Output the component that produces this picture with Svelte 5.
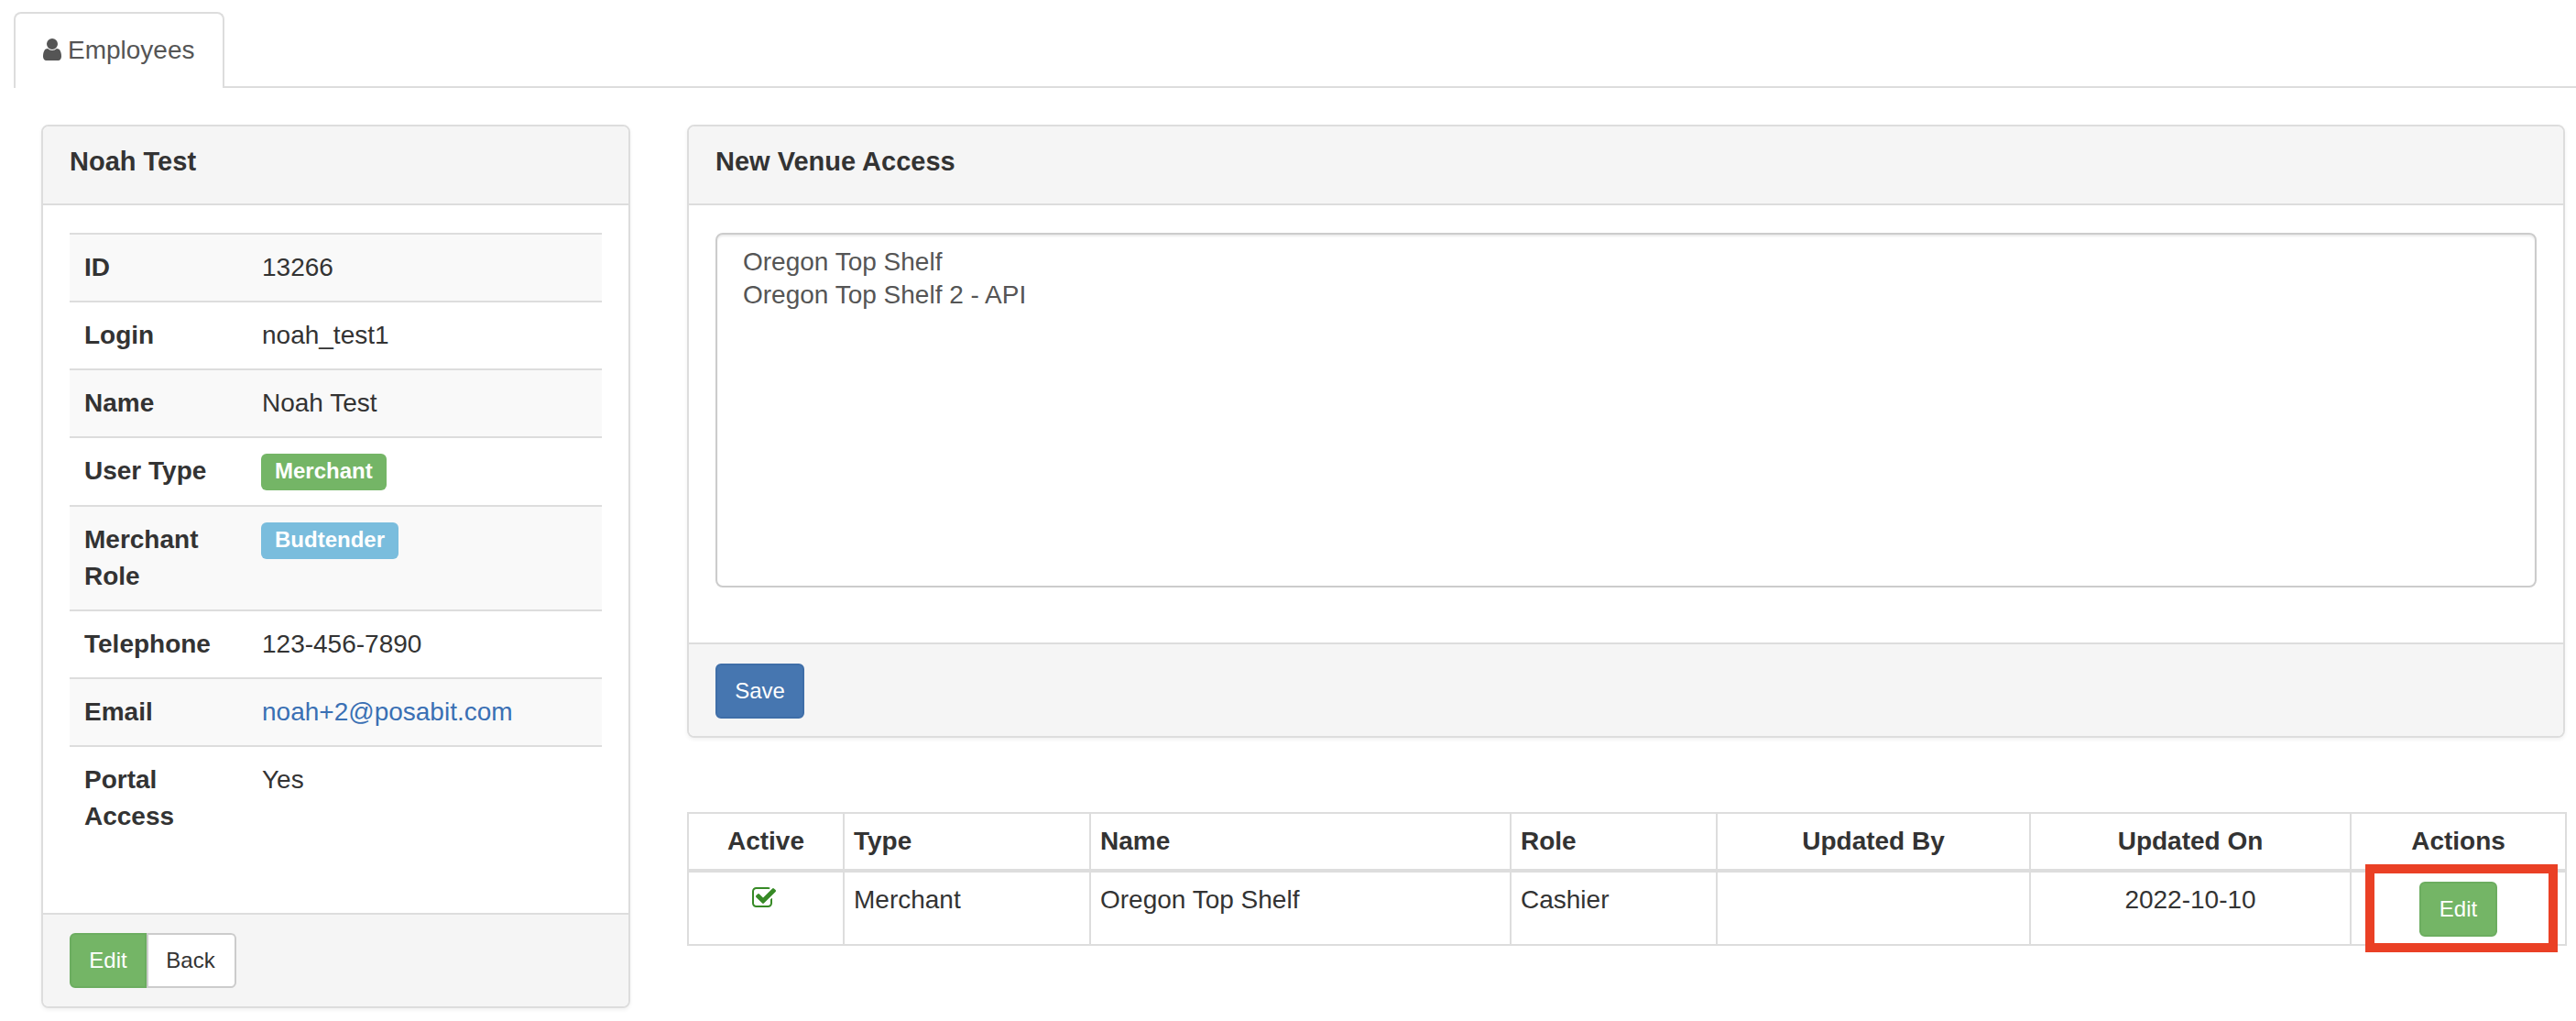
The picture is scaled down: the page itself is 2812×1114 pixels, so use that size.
<script>
  const details = [
    { k: 'ID', v: '13266' },
    { k: 'Login', v: 'noah_test1' },
    { k: 'Name', v: 'Noah Test' },
    { k: 'User Type', label: 'Merchant', tone: 'green' },
    { k: 'Merchant Role', label: 'Budtender', tone: 'blue' },
    { k: 'Telephone', v: '123-456-7890' },
    { k: 'Email', link: 'noah+2@posabit.com' },
    { k: 'Portal Access', v: 'Yes' }
  ];
  const widths = [170, 269, 459, 225, 342, 350, 235];
</script>

<div class="page">
  <nav class="tabs">
    <div class="tab">
      <svg class="user" viewBox="0 0 1792 1792" aria-hidden="true"><path d="M1536 1399q0 109-62.5 187t-150.5 78h-854q-88 0-150.5-78t-62.5-187q0-85 8.5-160.5t31.5-152 58.5-131 94-89 134.5-34.5q131 128 313 128t313-128q76 0 134.5 34.5t94 89 58.5 131 31.5 152 8.5 160.5zm-256-887q0 159-112.5 271.5t-271.5 112.5-271.5-112.5-112.5-271.5 112.5-271.5 271.5-112.5 271.5 112.5 112.5 271.5z"/></svg>
      Employees
    </div>
    <div class="tab-rest"></div>
  </nav>

  <div class="content">
    <section class="panel left">
      <header class="panel-head">Noah Test</header>
      <div class="panel-body">
        <table class="info">
          <tbody>
            {#each details as d}
              <tr>
                <th>{d.k}</th>
                <td>
                  {#if d.label}
                    <span class="label {d.tone}">{d.label}</span>
                  {:else if d.link}
                    <a href="#top">{d.link}</a>
                  {:else}
                    {d.v}
                  {/if}
                </td>
              </tr>
            {/each}
          </tbody>
        </table>
      </div>
      <footer class="panel-foot">
        <div class="btn-group">
          <button class="btn success">Edit</button>
          <button class="btn plain">Back</button>
        </div>
      </footer>
    </section>

    <div class="right">
      <section class="panel">
        <header class="panel-head">New Venue Access</header>
        <div class="panel-body">
          <div class="listbox" role="listbox" aria-multiselectable="true">
            <div role="option" aria-selected="false">Oregon Top Shelf</div>
            <div role="option" aria-selected="false">Oregon Top Shelf 2 - API</div>
          </div>
        </div>
        <footer class="panel-foot save-foot">
          <button class="btn primary">Save</button>
        </footer>
      </section>

      <table class="venues">
        <colgroup>
          {#each widths as w}<col style="width:{w}px" />{/each}
        </colgroup>
        <thead>
          <tr>
            <th class="c">Active</th>
            <th>Type</th>
            <th>Name</th>
            <th>Role</th>
            <th class="c">Updated By</th>
            <th class="c">Updated On</th>
            <th class="c">Actions</th>
          </tr>
        </thead>
        <tbody>
          <tr>
            <td class="c">
              <svg class="check" viewBox="0 0 1792 1792" aria-hidden="true"><path d="M1472 930v318q0 119-84.5 203.5t-203.5 84.5h-832q-119 0-203.5-84.5t-84.5-203.5v-832q0-119 84.5-203.5t203.5-84.5h832q63 0 117 25 15 7 18 23 3 17-9 29l-49 49q-10 10-23 10-3 0-9-2-23-6-45-6h-832q-66 0-113 47t-47 113v832q0 66 47 113t113 47h832q66 0 113-47t47-113v-254q0-13 9-22l64-64q10-10 23-10 6 0 12 3 20 8 20 29zm231-489l-814 814q-24 24-57 24t-57-24l-430-430q-24-24-24-57t24-57l110-110q24-24 57-24t57 24l263 263 647-647q24-24 57-24t57 24l110 110q24 24 24 57t-24 57z"/></svg>
            </td>
            <td>Merchant</td>
            <td>Oregon Top Shelf</td>
            <td>Cashier</td>
            <td></td>
            <td class="c">2022-10-10</td>
            <td class="c action">
              <button class="btn success">Edit</button>
              <span class="callout"></span>
            </td>
          </tr>
        </tbody>
      </table>
    </div>
  </div>
</div>

<style>
  :global(body) {
    margin: 0;
    background: #fff;
  }
  .page {
    font-family: "Liberation Sans", Arial, sans-serif;
    font-size: 28px;
    line-height: 40px;
    color: #333;
    padding-top: 13px;
    box-sizing: border-box;
    height: 1114px;
    overflow: hidden;
  }
  .tabs {
    display: flex;
    padding-left: 15px;
  }
  .tab {
    display: flex;
    align-items: center;
    gap: 5px;
    padding: 20px 30px 21px 29px;
    border: 2px solid #ddd;
    border-bottom: 0;
    border-radius: 8px 8px 0 0;
    color: #555;
  }
  .user {
    width: 28px;
    height: 28px;
    fill: #555;
    margin-left: -3px;
    margin-right: -2px;
    margin-top: -2px;
  }
  .tab-rest {
    flex: 1;
    border-bottom: 2px solid #ddd;
  }
  .content {
    display: flex;
    align-items: flex-start;
    gap: 62px;
    padding: 40px 12px 0 45px;
  }
  .left {
    width: 643px;
    flex: none;
  }
  .right {
    flex: 1;
    min-width: 0;
  }
  .panel {
    box-sizing: border-box;
    border: 2px solid #ddd;
    border-radius: 8px;
    background: #fff;
    box-shadow: 0 2px 4px rgba(0, 0, 0, 0.06);
  }
  .panel-head {
    background: #f5f5f5;
    border-bottom: 2px solid #ddd;
    border-radius: 6px 6px 0 0;
    padding: 18px 29px 26px;
    height: 40px;
    font-size: 29px;
    line-height: 40px;
    font-weight: 700;
  }
  .panel-body {
    padding: 30px 29px;
  }
  .panel-foot {
    background: #f5f5f5;
    border-top: 2px solid #ddd;
    border-radius: 0 0 6px 6px;
    padding: 20px 29px;
    display: flex;
  }
  .save-foot {
    padding: 21px 29px 19px;
  }
  .info {
    width: 100%;
    border-collapse: collapse;
    margin-bottom: 39px;
    table-layout: fixed;
  }
  .info th,
  .info td {
    padding: 16px;
    border-top: 2px solid #ddd;
    text-align: left;
    vertical-align: top;
  }
  .info th {
    width: 162px;
    font-weight: 700;
  }
  .info tr:nth-child(odd) {
    background: #f9f9f9;
  }
  a {
    color: #3a70b4;
    text-decoration: none;
  }
  .label {
    display: inline-block;
    vertical-align: top;
    font-size: 24px;
    line-height: 24px;
    font-weight: 700;
    color: #fff;
    padding: 7px 15px 9px;
    border-radius: 6px;
    margin-left: -1px;
    margin-top: 1px;
  }
  .green {
    background: #74b566;
  }
  .blue {
    background: #7abddd;
  }
  .btn {
    font-family: inherit;
    font-size: 24px;
    line-height: 32px;
    height: 60px;
    box-sizing: border-box;
    padding: 12px 22px;
    border: 2px solid transparent;
    border-radius: 6px;
    cursor: pointer;
  }
  .success {
    background: #74b566;
    border-color: #6cad60;
    color: #fff;
  }
  .primary {
    background: #4676b0;
    border-color: #3f6ea8;
    color: #fff;
    width: 97px;
    padding: 12px 0;
  }
  .plain {
    background: #fff;
    border-color: #ccc;
    color: #333;
  }
  .btn-group {
    display: flex;
  }
  .btn-group .success {
    width: 84px;
    padding: 12px 0;
    border-radius: 6px 0 0 6px;
  }
  .btn-group .plain {
    width: 98px;
    padding: 12px 0;
    border-left: 0;
    border-radius: 0 6px 6px 0;
    box-shadow: inset 2px 0 0 #ccc;
  }
  .listbox {
    box-sizing: border-box;
    height: 387px;
    border: 2px solid #ccc;
    border-radius: 8px;
    padding: 12px 28px;
    line-height: 36px;
    color: #555;
    box-shadow: inset 0 2px 2px rgba(0, 0, 0, 0.075);
    margin-bottom: 30px;
  }
  .venues {
    margin-top: 81px;
    width: 100%;
    table-layout: fixed;
    border-collapse: collapse;
  }
  .venues th,
  .venues td {
    border: 2px solid #ddd;
    padding: 10px;
    text-align: left;
    vertical-align: top;
  }
  .venues th {
    font-weight: 700;
    border-bottom-width: 4px;
  }
  .venues .c {
    text-align: center;
  }
  .check {
    display: block;
    width: 28px;
    height: 28px;
    fill: #378a26;
    margin: 4px auto 0;
    position: relative;
    left: -2px;
  }
  .venues .action {
    position: relative;
    padding-bottom: 8px;
  }
  .action .btn {
    display: block;
    margin: 0 auto;
    width: 85px;
    padding: 12px 0;
  }
  .callout {
    position: absolute;
    left: 15px;
    right: 8px;
    top: -9px;
    bottom: -9px;
    border: 10px solid #ea4025;
    pointer-events: none;
  }
</style>
